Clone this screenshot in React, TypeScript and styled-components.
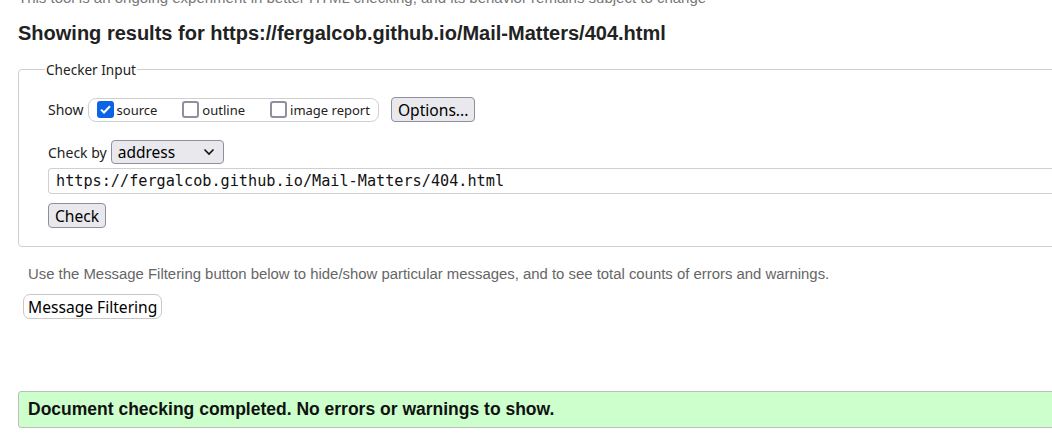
import React from "react";
import styled, { createGlobalStyle } from "styled-components";

const Global = createGlobalStyle`
  html, body { margin: 0; padding: 0; background: #fff; overflow: hidden; }
  body { font-family: "Liberation Sans", Arial, sans-serif; color: #000; }
`;

const Page = styled.div`
  padding: 0 0 0 18px;
  width: 1200px;
`;

const Intro = styled.p`
  margin: -10px 0 0;
  font-size: 15px;
  line-height: 16px;
  color: #777;
`;

const Heading = styled.h2`
  margin: 15px 0 0;
  font-size: 20px;
  line-height: 24px;
  font-weight: bold;
  color: #222;
`;

const Fieldset = styled.fieldset`
  margin: 15px 0 0;
  padding: 18px 0 18px 29px;
  border: 1px solid #cfcfcf;
  border-radius: 4px;
  width: 1100px;
  box-sizing: border-box;
  font-family: "Noto Sans", "Open Sans", sans-serif;
`;

const Legend = styled.legend`
  margin-left: -3px;
  padding: 0 1px;
  font-size: 13.6px;
  color: #222;
`;

const Row = styled.div<{ $top?: number }>`
  display: flex;
  align-items: center;
  gap: 4px;
  margin-top: ${(p) => p.$top ?? 0}px;
  font-size: 14px;
  color: #222;
`;

const CheckGroup = styled.div`
  display: flex;
  align-items: center;
  gap: 25px;
  height: 22px;
  padding: 0 8px;
  border: 1px solid #d0d0d0;
  border-radius: 8px;
`;

const CheckLabel = styled.label`
  display: flex;
  align-items: center;
  gap: 3px;
  font-size: 13px;
  color: #222;
`;

const Box = styled.span<{ $checked?: boolean }>`
  display: flex;
  align-items: center;
  justify-content: center;
  width: 17px;
  height: 17px;
  box-sizing: border-box;
  border-radius: 3px;
  border: 2px solid ${(p) => (p.$checked ? "#0b63e5" : "#8f8f9d")};
  background: ${(p) => (p.$checked ? "#0b63e5" : "#fff")};
`;

const NativeButton = styled.button<{ $left?: number; $top?: number }>`
  margin-left: ${(p) => p.$left ?? 0}px;
  margin-top: ${(p) => p.$top ?? 0}px;
  height: 25px;
  padding: 0 6px;
  font-family: "Noto Sans", "Open Sans", sans-serif;
  font-size: 15.6px;
  color: #000;
  background: #e9e9ed;
  border: 1px solid #8f8f9d;
  border-radius: 4px;
`;

const Select = styled.div`
  display: flex;
  align-items: center;
  justify-content: space-between;
  width: 113px;
  height: 24px;
  box-sizing: border-box;
  padding: 0 8px 0 6px;
  font-size: 15.5px;
  color: #000;
  background: #e9e9ed;
  border: 1px solid #8f8f9d;
  border-radius: 4px;
`;

const UrlInput = styled.div`
  margin-top: 4px;
  height: 26px;
  box-sizing: border-box;
  display: flex;
  align-items: center;
  padding-left: 7px;
  border: 1px solid #d0d0d0;
  border-right: none;
  border-radius: 4px 0 0 4px;
  font-family: "DejaVu Sans Mono", monospace;
  font-size: 15.2px;
  color: #111;
`;

const Stack = styled.div`
  display: flex;
  flex-direction: column;
  align-items: flex-start;
`;

const Help = styled.p`
  margin: 18px 0 0 10px;
  font-size: 14.9px;
  line-height: 18px;
  color: #666;
`;

const FilterButton = styled.button`
  margin: 11px 0 0 5px;
  height: 25px;
  padding: 0 4px;
  font-family: "Noto Sans", "Open Sans", sans-serif;
  font-size: 15.6px;
  color: #000;
  background: #fff;
  border: 1px solid #c8c8c8;
  border-radius: 7px;
`;

const Success = styled.div`
  margin-top: 72px;
  width: 1100px;
  height: 37px;
  box-sizing: border-box;
  display: flex;
  align-items: center;
  padding-left: 9px;
  background: #ccffcc;
  border: 1px solid #bdbdbd;
  border-radius: 3px;
  font-size: 17.5px;
  font-weight: bold;
  color: #111;
`;

const Chevron = () => (
  <svg width="12" height="8" viewBox="0 0 12 8" aria-hidden>
    <path d="M1.5 1.5 L6 6 L10.5 1.5" fill="none" stroke="#111" strokeWidth="1.6" />
  </svg>
);

const Tick = () => (
  <svg width="11" height="9" viewBox="0 0 11 9" aria-hidden>
    <path d="M1 4.6 L4 7.5 L10 1.2" fill="none" stroke="#fff" strokeWidth="2" />
  </svg>
);

const Check = ({ checked, label }: { checked?: boolean; label: string }) => (
  <CheckLabel>
    <Box $checked={checked}>{checked && <Tick />}</Box>
    {label}
  </CheckLabel>
);

export default function App() {
  return (
    <>
      <Global />
      <Page>
        <Intro>This tool is an ongoing experiment in better HTML checking, and its behavior remains subject to change</Intro>
        <Heading>Showing results for https://fergalcob.github.io/Mail-Matters/404.html</Heading>
        <Fieldset>
          <Legend>Checker Input</Legend>
          <Stack>
            <Row>
              <span>Show</span>
              <CheckGroup>
                <Check checked label="source" />
                <Check label="outline" />
                <Check label="image report" />
              </CheckGroup>
              <NativeButton $left={8}>Options...</NativeButton>
            </Row>
            <Row $top={18}>
              <span>Check by</span>
              <Select>address<Chevron /></Select>
            </Row>
          </Stack>
          <UrlInput>https://fergalcob.github.io/Mail-Matters/404.html</UrlInput>
          <Stack>
            <NativeButton $top={9}>Check</NativeButton>
          </Stack>
        </Fieldset>
        <Help>Use the Message Filtering button below to hide/show particular messages, and to see total counts of errors and warnings.</Help>
        <FilterButton>Message Filtering</FilterButton>
        <Success>Document checking completed. No errors or warnings to show.</Success>
      </Page>
    </>
  );
}
